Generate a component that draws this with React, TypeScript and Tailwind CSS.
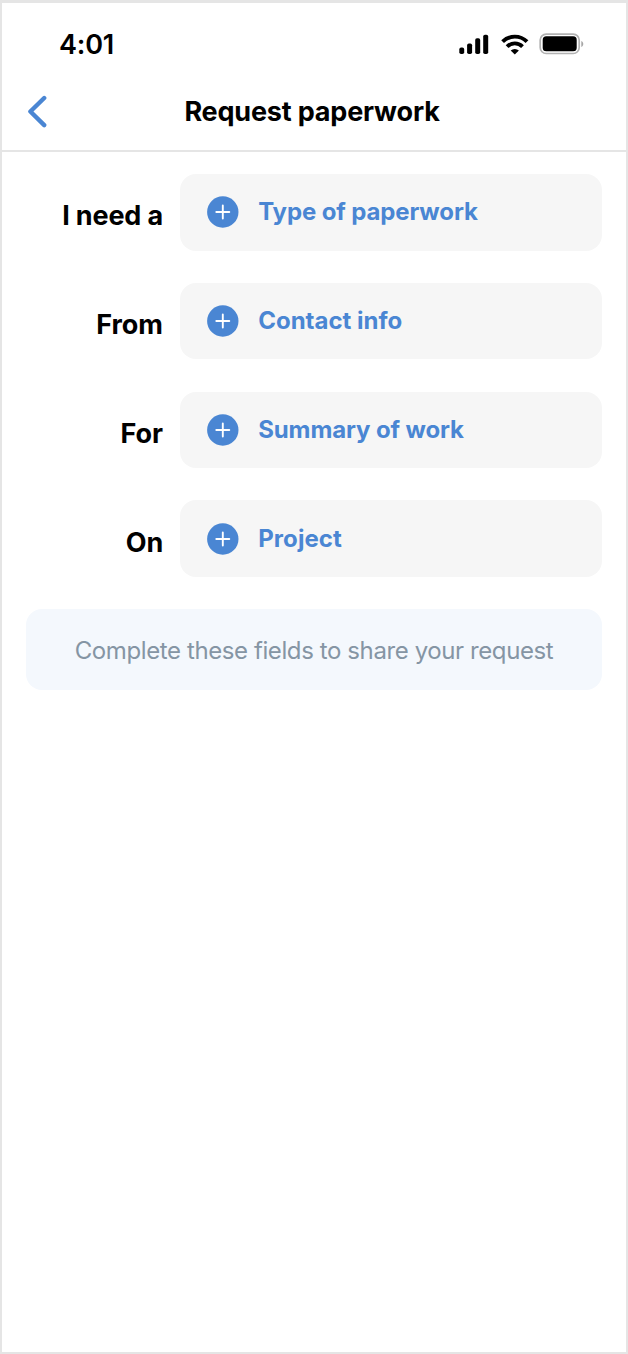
const fields = [
  { label: 'I need a', value: 'Type of paperwork', labelClass: 'tracking-[-0.15px]', valueClass: 'tracking-[-0.12px]' },
  { label: 'From', value: 'Contact info', labelClass: 'tracking-[0px]', valueClass: 'tracking-[0px]' },
  { label: 'For', value: 'Summary of work', labelClass: 'tracking-[0px]', valueClass: 'tracking-[-0.12px]' },
  { label: 'On', value: 'Project', labelClass: 'tracking-[-0.2px]', valueClass: 'tracking-[0.08px]' },
];

function StatusIcons() {
  return (
    <svg width="128" height="24" viewBox="0 0 128 24" aria-hidden="true">
      <rect x="3.3" y="14.6" width="4.9" height="6.4" rx="1.8" />
      <rect x="11.1" y="10.4" width="5" height="10.6" rx="1.8" />
      <rect x="19.2" y="5.2" width="5" height="15.8" rx="1.8" />
      <rect x="27.2" y="1.7" width="5" height="19.3" rx="1.8" />
      <g fill="none" stroke="#000" strokeWidth="3.9">
        <path d="M46.6 8.7a17.3 17.3 0 0 1 24.4 0" />
        <path d="M51.1 13.6a10.9 10.9 0 0 1 15.4 0" />
      </g>
      <path d="M54.7 17.6a5.9 5.9 0 0 1 8.2 0L58.8 21.6z" />
      <rect x="84.2" y="1.1" width="39" height="19.4" rx="6" fill="none" stroke="#b2b2b2" strokeWidth="1.7" />
      <rect x="86.7" y="3.3" width="34" height="15" rx="3.6" />
      <path d="M125.3 7.9c2.6 1.1 2.6 5 0 6.1z" fill="#a6a6a6" />
    </svg>
  );
}

function PlusIcon() {
  return (
    <svg className="shrink-0" width="32" height="32" viewBox="0 0 32 32" aria-hidden="true">
      <circle cx="15.8" cy="16" r="15.7" fill="#4a86d3" />
      <path d="M15.8 9.5v13M9.3 16h13" stroke="#fff" strokeWidth="1.9" strokeLinecap="round" />
    </svg>
  );
}

export default function App() {
  return (
    <div className="flex h-[1354px] w-[628px] flex-col border-x-2 border-b-2 border-t-[3px] border-[#e5e5e5] bg-white font-['Inter',sans-serif] text-black">
      <header className="flex h-[149px] shrink-0 flex-col border-b-2 border-[#e5e5e5]">
        <div className="flex h-[82px] items-center justify-between pl-[57px] pr-[42px] pt-px">
          <span className="pt-px text-[27px] font-semibold leading-8 tracking-[-0.2px]">4:01</span>
          <StatusIcons />
        </div>
        <div className="grid h-[54px] grid-cols-[60px_1fr_60px] items-center">
          <button className="pl-[24px]" aria-label="Back">
            <svg width="24" height="34" viewBox="0 0 24 34" fill="none" stroke="#4a86d3" strokeWidth="4.4" strokeLinecap="round" strokeLinejoin="round">
              <path d="M18.2 3 4.4 16.5l13.8 13.6" />
            </svg>
          </button>
          <h1 className="whitespace-nowrap pr-[4px] text-center text-[27px] font-[650] leading-8 tracking-[-0.18px]">Request paperwork</h1>
        </div>
      </header>
      <main className="px-[24px] pt-[22px]">
        <div className="flex flex-col gap-[32.3px]">
          {fields.map((f) => (
            <div key={f.label} className="flex h-[76.5px] items-center">
              <span className={`w-[137px] shrink-0 whitespace-nowrap pt-[8px] text-right text-[27px] font-[650] leading-8 ${f.labelClass}`}>{f.label}</span>
              <button className="ml-[16.7px] flex h-full flex-1 items-center gap-[19.5px] rounded-[16px] bg-[#f6f6f6] pl-[27px] text-left text-[#4a86d3]">
                <PlusIcon />
                <span className={`whitespace-nowrap text-[24px] font-[650] leading-8 ${f.valueClass}`}>{f.value}</span>
              </button>
            </div>
          ))}
        </div>
        <button className="mt-[32.5px] flex h-[81px] w-full items-center justify-center rounded-[16px] bg-[#f4f8fd] pt-[2px] text-[24px] leading-8 tracking-[-0.4px] text-[#8595a4]">
          Complete these fields to share your request
        </button>
      </main>
    </div>
  );
}
